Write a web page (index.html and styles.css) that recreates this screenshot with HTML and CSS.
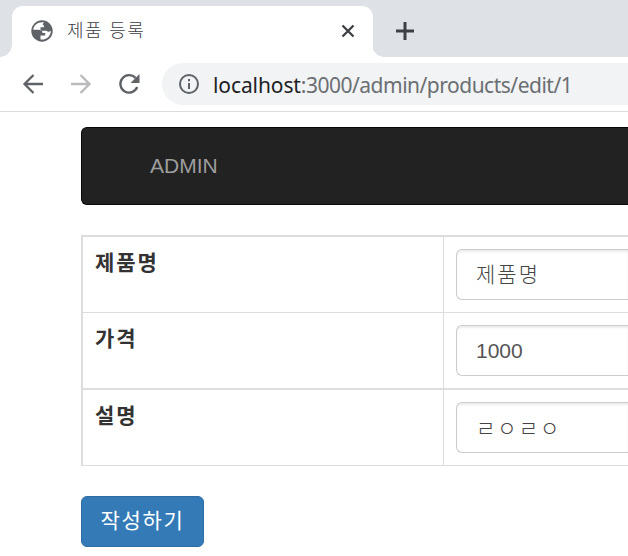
FILE: index.html
```html
<!DOCTYPE html>
<html lang="ko">
<head>
<meta charset="utf-8">
<title>제품 등록</title>
<link rel="stylesheet" href="styles.css">
</head>
<body>
<header class="browser">
  <div class="tabs">
    <div class="tab">
      <svg class="globe" viewBox="0 0 22 22" width="22" height="22"><circle cx="11" cy="11" r="10.7" fill="#5f6368"/><path d="M13 2.300C7 1.500 2.600 5.200 2.200 9.800H7.500C10 9.800 11.500 11 11.500 13H14.200V15.400H9.500V19.500C15.500 20.400 19.800 16 19.800 10.800C18.300 12.300 16.500 12 15.600 10.800H9.500V7.300H12.800V5H11.800C11.800 3.800 12.400 3 13 2.300Z" fill="#fff"/></svg>
      <span class="tab-title">제품 등록</span>
      <svg class="close" viewBox="0 0 14 14" width="14" height="14"><path d="M1.500 1.500L12.500 12.500M12.500 1.500L1.500 12.500"/></svg>
    </div>
    <svg class="plus" viewBox="0 0 18 18" width="18" height="18"><path d="M9 0V18M0 9H18"/></svg>
  </div>
  <div class="toolbar">
    <svg class="nav-icon" viewBox="0 0 20 20" width="20" height="20"><path d="M20 10H1.500M10.500 1L1.500 10L10.500 19"/></svg>
    <svg class="nav-icon disabled" viewBox="0 0 20 20" width="20" height="20"><path d="M0 10H18.500M9.500 1L18.500 10L9.500 19"/></svg>
    <svg class="nav-icon" viewBox="0 0 20 20" width="20" height="20"><path d="M18.200 13A8.700 8.700 0 1 1 16.500 4"/><path class="solid" d="M20.500 0V9H11.500Z"/></svg>
    <div class="address">
      <svg class="info" viewBox="0 0 20 20" width="20" height="20"><circle cx="10" cy="10" r="9"/><path d="M10 9V15M10 5V7.200"/></svg>
      <span class="url"><span class="host">localhost</span>:3000/admin/products/edit/1</span>
    </div>
  </div>
</header>
<main class="page">
  <nav class="navbar">ADMIN</nav>
  <div class="form-table">
    <div class="row"><div class="label">제품명</div><div class="cell"><div class="field">제품명</div></div></div>
    <div class="row"><div class="label">가격</div><div class="cell"><div class="field number">1000</div></div></div>
    <div class="row thick"><div class="label">설명</div><div class="cell"><div class="field jamo">ㄹㅇㄹㅇ</div></div></div>
  </div>
  <button class="submit">작성하기</button>
</main>
</body>
</html>
```
FILE: styles.css
```css
* { box-sizing: border-box; }
body {
  margin: 0;
  height: 556px;
  overflow: hidden;
  background: #fff;
  color: #333;
  font-family: "Liberation Sans", "Noto Sans CJK KR", sans-serif;
}
svg { display: block; flex: none; fill: none; overflow: visible; }
.browser { border-bottom: 1px solid #dadce0; }
.tabs {
  display: flex;
  height: 57px;
  padding: 6px 0 0 12px;
  background: radial-gradient(circle at 0 0, #dee1e6 11.5px, #fff 12px) 0 45px / 12px 12px no-repeat,
    radial-gradient(circle at 12px 0, #dee1e6 11.5px, #fff 12px) 372px 45px / 12px 12px no-repeat,
    #dee1e6;
}
.tab {
  display: flex;
  align-items: center;
  width: 361px;
  height: 51px;
  padding: 0 18px 1px 19px;
  border-radius: 11px 11px 0 0;
  background: #fff;
}
.tab-title {
  margin: -4px 0 0 14px;
  font: 300 18px/26px "Noto Sans CJK KR", sans-serif;
  letter-spacing: 1.4px;
  color: #3c4043;
}
.close { margin-left: auto; stroke: #3c4043; stroke-width: 2.300; }
.plus { margin: 16px 0 0 23px; stroke: #3c4043; stroke-width: 3; }
.toolbar {
  display: flex;
  align-items: center;
  height: 54px;
  padding-left: 23px;
  gap: 28px;
}
.nav-icon { stroke: #5f6368; stroke-width: 2.300; }
.nav-icon.disabled { stroke: #bababc; }
.nav-icon .solid { fill: #5f6368; stroke: none; }
.address {
  display: flex;
  align-items: center;
  flex: 1;
  height: 42px;
  margin-left: -5px;
  padding-left: 17px;
  border-radius: 21px 0 0 21px;
  background: #f1f3f4;
}
.info { stroke: #5f6368; stroke-width: 2; }
.url {
  margin: 1px 0 0 14px;
  font: 21px/30px "Noto Sans", sans-serif;
  letter-spacing: -.5px;
  color: #6b6e72;
  white-space: nowrap;
}
.host { letter-spacing: -.1px; color: #202124; }
.page { padding: 15px 0 0 81px; }
.navbar {
  height: 78px;
  padding-left: 68px;
  border: 1px solid #080808;
  border-right: 0;
  border-radius: 6px 0 0 6px;
  background: #222;
  color: #9d9d9d;
  font-size: 21px;
  line-height: 76px;
}
.form-table {
  margin-top: 30px;
  border: solid #ddd;
  border-width: 2px 0 1px 2px;
}
.row {
  display: grid;
  grid-template-columns: 360px 1fr;
  height: 75px;
}
.row + .row { height: 76px; border-top: 1px solid #ddd; }
.row + .row.thick { height: 77px; border-top-width: 2px; }
.label {
  padding: 9px 12px;
  font: 700 21px/30px "Noto Sans CJK KR", sans-serif;
  letter-spacing: 1.9px;
}
.cell {
  padding: 12px 0 12px 12px;
  border-left: 1px solid #ddd;
}
.field {
  height: 51px;
  padding-left: 19px;
  border: 1px solid #ccc;
  border-right: 0;
  border-radius: 6px 0 0 6px;
  box-shadow: inset 0 2px 2px rgba(0, 0, 0, .075);
  color: #444;
  font: 300 21px/47px "Noto Sans CJK KR", sans-serif;
  letter-spacing: 2px;
}
.field.jamo { line-height: 49px; }
.field.number {
  color: #555;
  font-family: "Liberation Sans", sans-serif;
  line-height: 49px;
  letter-spacing: 0;
}
.submit {
  display: block;
  width: 123px;
  height: 51px;
  margin-top: 30px;
  padding: 0 0 4px;
  border: 1px solid #2e6da4;
  border-radius: 6px;
  background: #337ab7;
  color: #fff;
  font: 21px/45px "Noto Sans CJK KR", sans-serif;
  letter-spacing: 1.7px;
}
```
